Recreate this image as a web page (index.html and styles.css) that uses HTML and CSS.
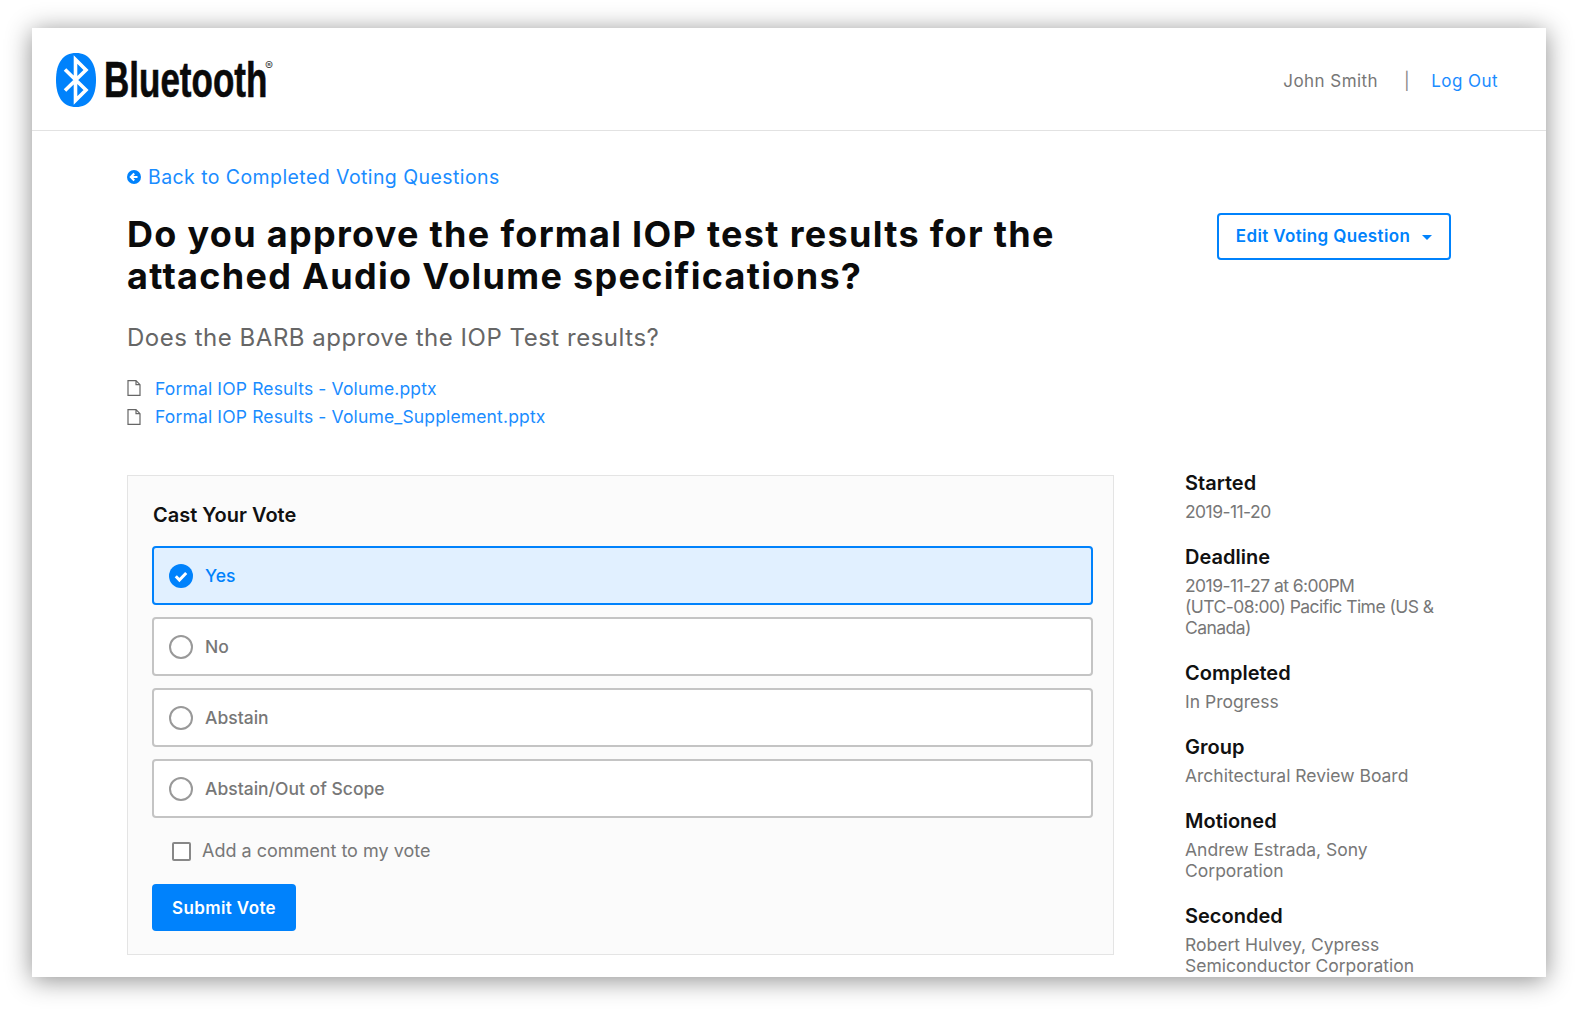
FILE: index.html
```html
<!DOCTYPE html>
<html lang="en">
<head>
    <meta charset="UTF-8">
    <title>Voting Question</title>
    <link rel="stylesheet" href="styles.css">
</head>
<body>
    <div class="window">
        <header class="site-header">
            <div class="logo">
                <svg class="logo-mark" viewBox="0 0 40 54" width="40" height="54">
                    <path d="M20 0C33 0 40 10 40 27S33 54 20 54 0 44 0 27 7 0 20 0Z" fill="#0082fc"/>
                    <path d="M9 16.5 30 37 19.5 47.5V6.5L30 17 9 37.5" fill="none" stroke="#fff" stroke-width="3.6"/>
                </svg>
                <span class="logo-word">Bluetooth</span>
                <span class="logo-reg">®</span>
            </div>
            <nav class="user-nav">
                <span class="user-name">John Smith</span>
                <span class="user-sep">|</span>
                <a class="link" href="#">Log Out</a>
            </nav>
        </header>

        <main class="content">
            <a class="back-link link" href="#">
                <svg viewBox="0 0 14 14" width="14" height="14">
                    <circle cx="7" cy="7" r="7" fill="#0082fc"/>
                    <path d="M7.2 3.6 3.9 7l3.3 3.4M4.2 7h6.3" fill="none" stroke="#fff" stroke-width="2.2"/>
                </svg>
                Back to Completed Voting Questions
            </a>

            <div class="title-row">
                <h1>Do you approve the formal IOP test results for the attached Audio Volume specifications?</h1>
                <button class="edit-btn" type="button">Edit Voting Question <i class="caret"></i></button>
            </div>

            <p class="subtitle">Does the BARB approve the IOP Test results?</p>

            <ul class="files">
                <li>
                    <svg viewBox="0 0 14 16" width="14" height="16"><path d="M1 .7h8l4 4v10.6H1ZM9 .7v4h4" fill="none" stroke="#666" stroke-width="1.2"/></svg>
                    <a class="link" href="#">Formal IOP Results - Volume.pptx</a>
                </li>
                <li>
                    <svg viewBox="0 0 14 16" width="14" height="16"><path d="M1 .7h8l4 4v10.6H1ZM9 .7v4h4" fill="none" stroke="#666" stroke-width="1.2"/></svg>
                    <a class="link" href="#">Formal IOP Results - Volume_Supplement.pptx</a>
                </li>
            </ul>

            <div class="columns">
                <section class="vote-panel">
                    <h2>Cast Your Vote</h2>
                    <div class="option selected">
                        <svg viewBox="0 0 24 24" width="24" height="24">
                            <circle cx="12" cy="12" r="12" fill="#0082fc"/>
                            <path d="M6.8 12.3 10.4 16l6.8-7" fill="none" stroke="#fff" stroke-width="3"/>
                        </svg>
                        Yes
                    </div>
                    <div class="option"><i class="radio"></i>No</div>
                    <div class="option"><i class="radio"></i>Abstain</div>
                    <div class="option"><i class="radio"></i>Abstain/Out of Scope</div>
                    <label class="comment"><i class="checkbox"></i>Add a comment to my vote</label>
                    <button class="submit-btn" type="button">Submit Vote</button>
                </section>

                <aside class="details">
                    <h3>Started</h3>
                    <p class="tight">2019-11-20</p>
                    <h3>Deadline</h3>
                    <p class="tight">2019-11-27 at 6:00PM<br>(UTC-08:00) Pacific Time (US &amp;<br>Canada)</p>
                    <h3>Completed</h3>
                    <p>In Progress</p>
                    <h3>Group</h3>
                    <p>Architectural Review Board</p>
                    <h3>Motioned</h3>
                    <p>Andrew Estrada, Sony<br>Corporation</p>
                    <h3>Seconded</h3>
                    <p>Robert Hulvey, Cypress<br>Semiconductor Corporation</p>
                </aside>
            </div>
        </main>
    </div>
</body>
</html>
```

FILE: styles.css
```css
* {
    box-sizing: border-box;
    margin: 0;
    padding: 0;
}

html, body {
    height: 1013px;
    overflow: hidden;
    background: #fff;
}

body {
    font-family: Inter, "Noto Sans", sans-serif;
    padding: 28px 32px 36px;
}

.window {
    width: 1514px;
    height: 949px;
    background: #fff;
    overflow: hidden;
    box-shadow: 0 3px 24px rgba(0, 0, 0, 0.45);
}

.link {
    color: #1a8cff;
    text-decoration: none;
}

.site-header {
    height: 103px;
    border-bottom: 1px solid #e2e2e2;
    display: flex;
    align-items: center;
    justify-content: space-between;
    padding: 2px 48px 0 24px;
}

.logo {
    display: flex;
    align-items: flex-start;
    height: 54px;
    color: #0a0a0a;
}

.logo-mark {
    flex: none;
}

.logo-word {
    width: 162px;
    margin-left: 8px;
    font-family: "Liberation Sans", sans-serif;
    font-weight: 700;
    font-size: 50px;
    line-height: 54px;
    transform: scaleX(0.7);
    transform-origin: left center;
    white-space: nowrap;
    -webkit-text-stroke: 0.6px #0a0a0a;
}

.logo-reg {
    font-size: 12px;
    line-height: 12px;
    margin-top: 7px;
    margin-left: -1px;
    color: #444;
}

.user-nav {
    display: flex;
    gap: 26px;
    margin-top: 2px;
    font-size: 17px;
    letter-spacing: 0.45px;
    color: #777;
}

.user-sep {
    margin-right: -5px;
    color: #888;
}

.content {
    padding: 34px 95px 0;
}

.back-link {
    display: flex;
    align-items: center;
    gap: 7px;
    font-size: 19.5px;
    letter-spacing: 0.42px;
    line-height: 24px;
}

.title-row {
    display: flex;
    justify-content: space-between;
    align-items: flex-start;
    margin-top: 24px;
}

h1 {
    width: 1000px;
    color: #0b0b0b;
    font-size: 36px;
    font-weight: 700;
    line-height: 42px;
    letter-spacing: 1.3px;
}

.edit-btn {
    width: 234px;
    height: 47px;
    padding-bottom: 2px;
    background: #fff;
    color: #0082fc;
    border: 2px solid #0082fc;
    border-radius: 4px;
    font: 600 17px Inter, "Noto Sans", sans-serif;
    letter-spacing: 0.35px;
    display: flex;
    align-items: center;
    justify-content: center;
    gap: 12px;
}

.caret {
    width: 0;
    height: 0;
    margin-top: 3px;
    border-left: 5px solid transparent;
    border-right: 5px solid transparent;
    border-top: 5px solid #0082fc;
}

.subtitle {
    margin-top: 25px;
    color: #666;
    font-size: 24px;
    letter-spacing: 0.52px;
    line-height: 32px;
}

.files {
    list-style: none;
    margin-top: 20px;
}

.files li {
    display: flex;
    align-items: center;
    gap: 14px;
    height: 28.5px;
    font-size: 17.5px;
    letter-spacing: 0.15px;
}

.columns {
    display: flex;
    margin-top: 44px;
}

.vote-panel {
    flex: none;
    width: 987px;
    height: 480px;
    background: #fbfbfb;
    border: 1px solid #e4e4e4;
    padding: 26px 20px 0 24px;
}

.vote-panel h2 {
    color: #111;
    font-size: 20px;
    font-weight: 600;
    line-height: 26px;
    margin-bottom: 18px;
    padding-left: 1px;
}

.option {
    display: flex;
    align-items: center;
    gap: 9px;
    height: 59px;
    margin-bottom: 12px;
    padding-left: 15px;
    background: #fff;
    border: 2px solid #c4c4c4;
    border-radius: 4px;
    color: #777;
    font-size: 17.5px;
    font-weight: 500;
}

.option.selected {
    background: #e1f0ff;
    border-color: #0082fc;
    color: #0082fc;
}

.option svg {
    margin-right: 3px;
}

.radio {
    flex: none;
    width: 24px;
    height: 24px;
    margin-right: 3px;
    border: 2px solid #999;
    border-radius: 50%;
    background: #fff;
}

.comment {
    display: flex;
    align-items: center;
    gap: 11px;
    padding-left: 20px;
    color: #777;
    font-size: 18px;
    line-height: 24px;
    margin-top: 21px;
}

.checkbox {
    flex: none;
    width: 19px;
    height: 19px;
    border: 2px solid #888;
    border-radius: 2px;
    background: #fff;
}

.submit-btn {
    display: block;
    width: 144px;
    height: 47px;
    margin-top: 21px;
    background: #0082fc;
    color: #fff;
    border: none;
    border-radius: 4px;
    font: 600 17px Inter, "Noto Sans", sans-serif;
    letter-spacing: 0.4px;
}

.details {
    margin-left: 71px;
    width: 270px;
    flex: none;
}

.details h3 {
    color: #111;
    font-size: 20px;
    font-weight: 600;
    line-height: 26px;
    margin-top: 22.5px;
}

.details h3:first-child {
    margin-top: -5px;
}

.details p {
    margin-top: 4.5px;
    color: #777;
    font-size: 17.5px;
    line-height: 21px;
}

.details p.tight {
    letter-spacing: -0.55px;
}
```
